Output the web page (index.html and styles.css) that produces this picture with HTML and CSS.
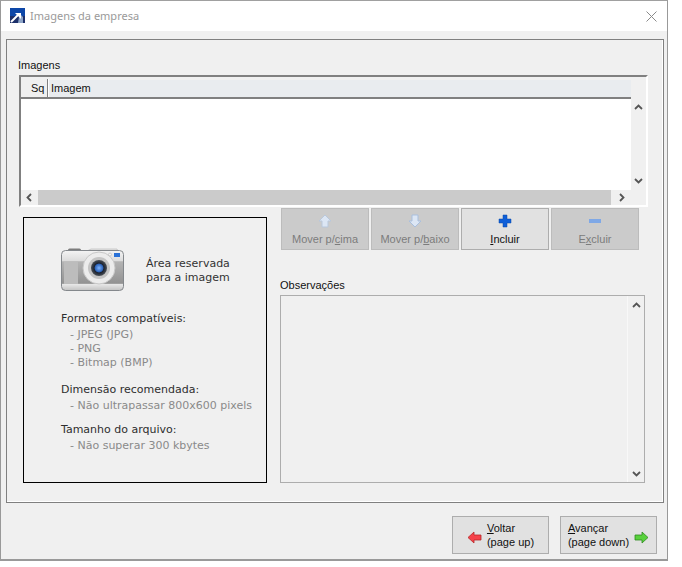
FILE: index.html
```html
<!DOCTYPE html>
<html lang="pt">
<head>
<meta charset="utf-8">
<title>Imagens da empresa</title>
<link rel="stylesheet" href="styles.css">
</head>
<body>
<div class="window">
  <header class="titlebar">
    <svg class="app-icon" width="15" height="15" viewBox="0 0 15 15">
      <rect width="15" height="15" fill="#0d47a8"/>
      <rect y="8" width="15" height="7" fill="#1c2f6a"/>
      <path d="M9 9l2-2 2 2v6H8z" fill="#8fa6c8"/>
      <path d="M1 14l7-7" stroke="#fff" stroke-width="2" fill="none"/>
      <path d="M5 5h6v6z" fill="#fff"/>
    </svg>
    <span class="title">Imagens da empresa</span>
    <svg class="close" width="11" height="11" viewBox="0 0 11 11"><path d="M0.5 0.5l10 10M10.5 0.5l-10 10" stroke="#8a8a8a" stroke-width="1" fill="none"/></svg>
  </header>
  <main class="content">
    <section class="group">
      <div class="field-label images-label">Imagens</div>
      <div class="grid">
        <div class="grid-main">
          <div class="grid-head">
            <div class="cell-sq">Sq</div>
            <div class="cell-img">Imagem</div>
          </div>
          <div class="grid-body"></div>
          <div class="hscroll">
            <div class="sbtn"><svg width="9" height="9" viewBox="0 0 9 9"><path d="M6 1L2.5 4.5 6 8" class="chev"/></svg></div>
            <div class="htrack"></div>
            <div class="sbtn right"><svg width="9" height="9" viewBox="0 0 9 9"><path d="M3 1l3.500 3.500L3 8" class="chev"/></svg></div>
          </div>
        </div>
        <div class="vscroll">
          <svg width="9" height="9" viewBox="0 0 9 9"><path d="M1 6l3.500-3.500L8 6" class="chev"/></svg>
          <svg width="9" height="9" viewBox="0 0 9 9"><path d="M1 3l3.500 3.500L8 3" class="chev"/></svg>
        </div>
      </div>
      <div class="lower">
        <aside class="reserved">
          <div class="reserved-top">
            <svg class="camera" width="66" height="45" viewBox="0 0 66 45">
              <defs>
                <linearGradient id="cam-body" x1="0" y1="0" x2="0" y2="1">
                  <stop offset="0" stop-color="#f4f4f4"/><stop offset="0.26" stop-color="#dcdcdc"/><stop offset="0.28" stop-color="#b4b4b4"/><stop offset="0.82" stop-color="#929292"/><stop offset="0.85" stop-color="#e6e6e6"/><stop offset="1" stop-color="#c2c2c2"/>
                </linearGradient>
                <radialGradient id="cam-lens"><stop offset="0" stop-color="#7db4ff"/><stop offset="0.5" stop-color="#2b62b8"/><stop offset="0.6" stop-color="#1b2230"/><stop offset="1" stop-color="#4a4f55"/></radialGradient>
              </defs>
              <rect x="7" y="0.500" width="13" height="4" rx="1.500" fill="#7d7d7d"/>
              <path d="M26 3l4-2h26l2 4H26z" fill="#e6e6e6" stroke="#a5a5a5" stroke-width="0.500"/>
              <rect x="0.500" y="2.500" width="62" height="40" rx="4" fill="url(#cam-body)" stroke="#84888c"/>
              <rect x="3" y="14" width="14" height="22" fill="#bcbcbc"/>
              <circle cx="38" cy="20" r="16" fill="#ececec" stroke="#c8c8c8"/>
              <circle cx="38" cy="20" r="11" fill="#c4c4c4"/>
              <circle cx="38" cy="20" r="8" fill="url(#cam-lens)"/>
              <rect x="53" y="5" width="6" height="4" fill="#2a72d8"/>
              <circle cx="49" cy="6.500" r="1.500" fill="#f4f4f4" stroke="#aaa" stroke-width="0.500"/>
            </svg>
            <div class="reserved-note">Área reservada<br>para a imagem</div>
          </div>
          <div class="info first">
            <div class="info-title">Formatos compatíveis:</div>
            <div class="info-item">- JPEG (JPG)</div>
            <div class="info-item">- PNG</div>
            <div class="info-item">- Bitmap (BMP)</div>
          </div>
          <div class="info second">
            <div class="info-title">Dimensão recomendada:</div>
            <div class="info-item">- Não ultrapassar 800x600 pixels</div>
          </div>
          <div class="info third">
            <div class="info-title">Tamanho do arquivo:</div>
            <div class="info-item">- Não superar 300 kbytes</div>
          </div>
        </aside>
        <div class="side">
          <div class="toolbar">
            <button class="tool" disabled>
              <svg width="16" height="14" viewBox="0 0 16 14"><path d="M8 1l6 6h-3v6H5V7H2z" fill="#dce6f4" stroke="#b9c8dc"/></svg>
              <span>Mover p/<u>c</u>ima</span>
            </button>
            <button class="tool" disabled>
              <svg width="16" height="14" viewBox="0 0 16 14"><path d="M8 13L2 7h3V1h6v6h3z" fill="#dce6f4" stroke="#a9bfde"/></svg>
              <span>Mover p/<u>b</u>aixo</span>
            </button>
            <button class="tool active">
              <svg width="16" height="14" viewBox="0 0 16 14"><path d="M6 1h4v4h4v4h-4v4H6V9H2V5h4z" fill="#0f5fd8" stroke="#0a4aa8" stroke-width="0.500"/></svg>
              <span><u>I</u>ncluir</span>
            </button>
            <button class="tool" disabled>
              <svg width="16" height="14" viewBox="0 0 16 14"><rect x="2" y="5" width="12" height="4" fill="#7fa8e6"/></svg>
              <span>E<u>x</u>cluir</span>
            </button>
          </div>
          <div class="field-label obs-label">Observações</div>
          <div class="obs">
            <div class="obs-text"></div>
            <div class="obs-scroll">
              <svg width="9" height="9" viewBox="0 0 9 9"><path d="M1 6l3.500-3.500L8 6" class="chev"/></svg>
              <svg width="9" height="9" viewBox="0 0 9 9"><path d="M1 3l3.500 3.500L8 3" class="chev"/></svg>
            </div>
          </div>
        </div>
      </div>
    </section>
    <footer class="footer">
      <button class="nav">
        <svg class="arrow" width="15" height="13" viewBox="0 0 15 13"><path d="M7 1L1 6.500 7 12V9h7V4H7z" fill="#f5424a" stroke="#b52a2a" stroke-width="0.800"/></svg>
        <span class="nav-text"><u>V</u>oltar<br>(page up)</span>
      </button>
      <button class="nav">
        <span class="nav-text"><u>A</u>vançar<br>(page down)</span>
        <svg class="arrow" width="15" height="13" viewBox="0 0 15 13"><path d="M8 1l6 5.500L8 12V9H1V4h7z" fill="#58d13c" stroke="#2f8a20" stroke-width="0.800"/></svg>
      </button>
    </footer>
  </main>
</div>
</body>
</html>
```
FILE: styles.css
```css
* { box-sizing: border-box; }
html, body { margin: 0; padding: 0; background: #fff; }
body { width: 682px; height: 567px; font-family: "Liberation Sans", Arial, sans-serif; font-size: 11px; color: #111; }
.window { width: 668px; height: 561px; border: 1px solid #999; border-bottom-width: 2px; border-top-color: #a0a0a0; display: flex; flex-direction: column; background: #f0f0f0; }
.titlebar { height: 30px; background: #fff; display: flex; align-items: center; padding: 0 10px 0 9px; flex: none; }
.app-icon { margin-right: 5px; margin-top: -1px; }
.title { font-family: "Noto Sans", sans-serif; font-size: 11px; color: #9a9a9a; flex: 1; margin-top: -1px; }
.close { margin-right: 0; margin-top: 0; }
.content { flex: 1; display: flex; flex-direction: column; padding: 8px 3px 0 5px; }
.group { height: 464px; border: 1px solid #808080; box-shadow: inset -1px -1px 0 #fff; padding: 18px 14px 0 12px; flex: none; }
.field-label { line-height: 15px; height: 15px; }
.images-label { margin: 0 0 2px -1px; }
.grid { width: 629px; height: 132px; display: flex; border: 2px solid #fff; border-top-color: #808080; border-left-color: #808080; background: #f0f0f0; }
.grid-main { width: 610px; display: flex; flex-direction: column; flex: none; }
.grid-head { height: 22px; flex: none; display: flex; padding-top: 2px; border-bottom: 2px solid #808080; background: #e9ecef; box-shadow: inset 0 3px 0 #f0f0f0; line-height: 19px; }
.cell-sq { width: 27px; padding-left: 10px; border-right: 1px solid #808080; box-shadow: 1px 0 0 #fff; background: #f0f0f0; }
.cell-img { padding-left: 3px; }
.grid-body { flex: 1; background: #fff; }
.hscroll { height: 15px; flex: none; display: flex; background: #cbcbcb; }
.sbtn { width: 17px; background: #f0f0f0; display: flex; align-items: center; justify-content: center; flex: none; }
.sbtn.right { width: 20px; }
.htrack { flex: 1; }
.chev { fill: none; stroke: #555; stroke-width: 1.800; }
.vscroll { flex: 1; display: flex; flex-direction: column; justify-content: space-between; align-items: center; padding: 26px 0 20px; }
.lower { display: flex; margin-top: 1px; }
.reserved { width: 244px; height: 266px; margin: 9px 13px 0 4px; border: 1px solid #000; padding: 30px 0 0 37px; font-family: "DejaVu Sans", sans-serif; font-size: 11px; line-height: 14px; flex: none; }
.reserved-top { display: flex; align-items: center; height: 45px; }
.camera { flex: none; }
.reserved-note { margin-left: 19px; color: #333; }
.info { color: #2e2e2e; }
.info.first { margin-top: 19px; }
.info.second { margin-top: 13px; }
.info.third { margin-top: 10px; }
.info-title { margin-bottom: 2px; }
.info-item { padding-left: 9px; color: #8a8a8a; }
.side { display: flex; flex-direction: column; width: 366px; }
.toolbar { display: flex; gap: 2px; padding-left: 1px; }
.tool { width: 88px; height: 42px; padding: 5px 0 0; border: 1px solid #bcbcbc; background: #cbcbcb; color: #7c7c7c; font: 11px "Liberation Sans", Arial, sans-serif; display: flex; flex-direction: column; align-items: center; justify-content: flex-start; gap: 5px; }
.tool.active { background: #e1e1e1; border-color: #adadad; color: #111; }
.field-label.obs-label { margin-top: 28px; height: 15px; margin-bottom: 2px; }
.obs { width: 365px; height: 188px; border: 1px solid #adadad; display: flex; }
.obs-text { flex: 1; }
.obs-scroll { width: 17px; border-left: 1px solid #f8f8f8; display: flex; flex-direction: column; justify-content: space-between; align-items: center; padding: 5px 0 4px; }
.footer { display: flex; justify-content: flex-end; gap: 11px; padding: 13px 7px 0 0; }
.nav { width: 97px; height: 38px; padding: 0; border: 1px solid #adadad; background: #e1e1e1; color: #111; font: 11px/14px "Liberation Sans", Arial, sans-serif; text-align: left; display: flex; align-items: center; justify-content: center; gap: 5px; }
.nav-text { display: block; }
.arrow { margin-top: 4px; }
```
